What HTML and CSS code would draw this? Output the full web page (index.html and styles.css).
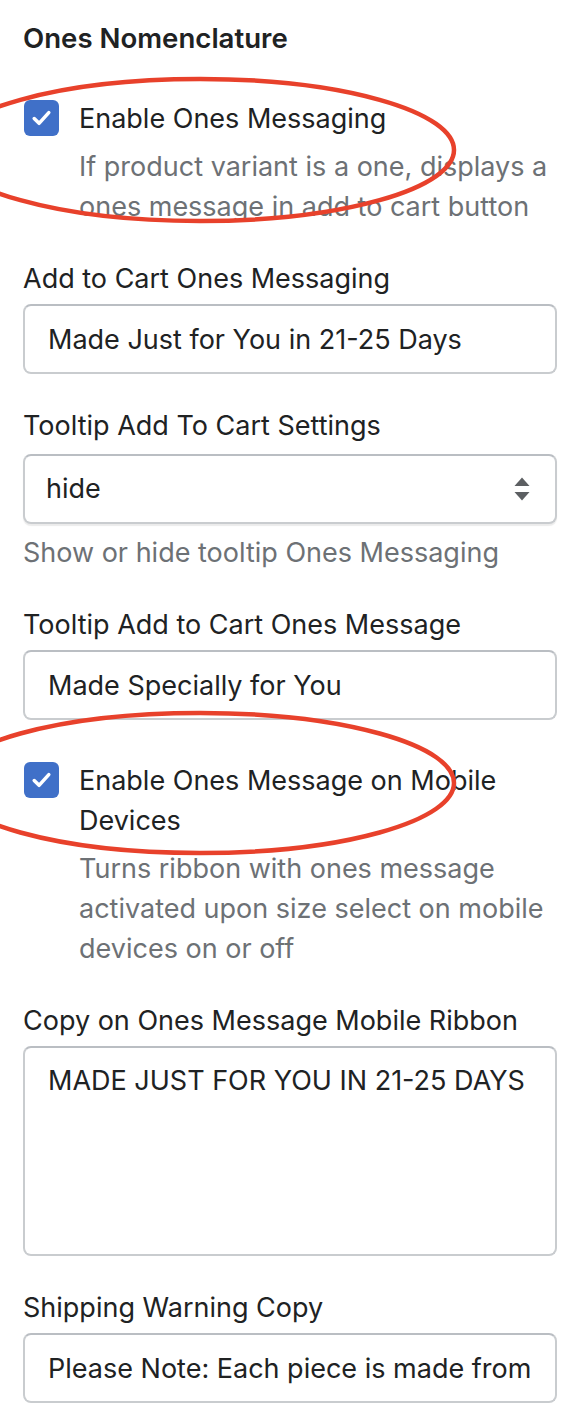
FILE: index.html
```html
<!DOCTYPE html>
<html lang="en">
<head>
<meta charset="utf-8">
<title>Ones Nomenclature</title>
<link rel="stylesheet" href="styles.css">
</head>
<body>
<main class="panel">
  <h2 class="heading">Ones Nomenclature</h2>

  <div class="check-field">
    <div class="check-row">
      <span class="checkbox"><svg viewBox="0 0 36 36" width="36" height="36"><path d="M10.5 18.5 L15.5 23.5 L25.5 12.5" fill="none" stroke="#fff" stroke-width="3.6" stroke-linecap="round" stroke-linejoin="round"/></svg></span>
      <span class="check-label">Enable Ones Messaging</span>
    </div>
    <p class="help indented">If product variant is a one, displays a ones message in add to cart button</p>
  </div>

  <div class="field">
    <label class="label">Add to Cart Ones Messaging</label>
    <input class="input" type="text" value="Made Just for You in 21-25 Days" readonly>
  </div>

  <div class="field">
    <label class="label label-select">Tooltip Add To Cart Settings</label>
    <div class="select">
      <span class="select-value">hide</span>
      <svg class="select-arrows" viewBox="0 0 16 24" width="16" height="24"><path d="M8 0.5 L15.5 9 H0.5 Z" fill="#5c5f62"/><path d="M8 23.5 L15.5 15 H0.5 Z" fill="#5c5f62"/></svg>
    </div>
    <p class="help help-below">Show or hide tooltip Ones Messaging</p>
  </div>

  <div class="field">
    <label class="label">Tooltip Add to Cart Ones Message</label>
    <input class="input" type="text" value="Made Specially for You" readonly>
  </div>

  <div class="check-field">
    <div class="check-row">
      <span class="checkbox"><svg viewBox="0 0 36 36" width="36" height="36"><path d="M10.5 18.5 L15.5 23.5 L25.5 12.5" fill="none" stroke="#fff" stroke-width="3.6" stroke-linecap="round" stroke-linejoin="round"/></svg></span>
      <span class="check-label">Enable Ones Message on Mobile Devices</span>
    </div>
    <p class="help indented">Turns ribbon with ones message activated upon size select on mobile devices on or off</p>
  </div>

  <div class="field">
    <label class="label">Copy on Ones Message Mobile Ribbon</label>
    <textarea class="textarea" readonly>MADE JUST FOR YOU IN 21-25 DAYS</textarea>
  </div>

  <div class="field">
    <label class="label">Shipping Warning Copy</label>
    <input class="input" type="text" value="Please Note: Each piece is made from scratch just for you." readonly>
  </div>
</main>

<svg class="annotations" viewBox="0 0 574 1424" width="574" height="1424">
  <ellipse cx="200" cy="150" rx="254" ry="71" fill="none" stroke="#e8412b" stroke-width="4.5"/>
  <ellipse cx="200" cy="783" rx="254" ry="70" fill="none" stroke="#e8412b" stroke-width="4.5"/>
</svg>
</body>
</html>
```

FILE: styles.css
```css
* { box-sizing: border-box; }

html, body {
  margin: 0;
  padding: 0;
  background: #ffffff;
}

body {
  position: relative;
  width: 574px;
  min-height: 1424px;
  overflow: hidden;
  font-family: Inter, "Noto Sans", "Liberation Sans", sans-serif;
  font-size: 27px;
  line-height: 40px;
  color: #202223;
}

.panel {
  padding: 18px 17px 0 23px;
  display: flex;
  flex-direction: column;
}

.heading {
  margin: 0;
  font-size: 27.6px;
  line-height: 40px;
  font-weight: 600;
}

.check-field {
  margin-top: 41px;
  display: flex;
  flex-direction: column;
}

.check-row {
  display: flex;
  align-items: flex-start;
  gap: 20px;
}

.checkbox {
  flex: 0 0 35px;
  width: 35px;
  height: 36px;
  margin-top: 1px;
  margin-left: 1px;
  border-radius: 6px;
  background: #4070c8;
  display: flex;
  align-items: center;
  justify-content: center;
}

.checkbox svg { display: block; }

.check-label {
  padding-right: 40px;
}

.help {
  margin: 0;
  color: #6d7175;
}

.indented {
  margin-top: 8px;
  padding-left: 56px;
}

.help-below {
  margin-top: 9px;
}

.field {
  margin-top: 32px;
  display: flex;
  flex-direction: column;
}

.label {
  display: block;
  line-height: 40px;
  margin-bottom: 5px;
}

.label-select {
  margin-bottom: 8px;
}

.input,
.textarea,
.select {
  width: 100%;
  margin: 0;
  border: 2px solid #c9cccf;
  border-top-color: #babec3;
  border-radius: 8px;
  background: #ffffff;
  font: inherit;
  color: #202223;
  outline: none;
}

.input {
  height: 70px;
  padding: 13px 23px;
  line-height: 40px;
}

.textarea {
  height: 210px;
  padding: 13px 18px 13px 23px;
  line-height: 40px;
  resize: none;
  overflow: hidden;
  display: block;
}

.select {
  height: 70px;
  padding: 13px 25px 13px 21px;
  display: flex;
  align-items: center;
  justify-content: space-between;
  box-shadow: 0 2px 1px rgba(0, 0, 0, 0.08);
}

.select-arrows { display: block; }

.annotations {
  position: absolute;
  top: 0;
  left: 0;
  pointer-events: none;
}
```
